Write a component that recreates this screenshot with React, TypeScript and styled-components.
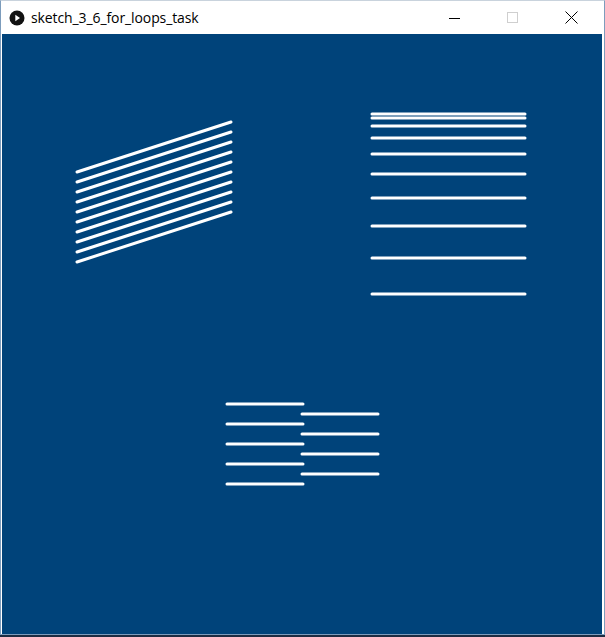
import React from 'react';
import styled, { createGlobalStyle } from 'styled-components';

const GlobalStyle = createGlobalStyle`
  html, body {
    margin: 0;
    padding: 0;
    background: #1d2c42;
  }
`;

const colours = {
  canvas: '#00437a',
  frame: '#7c9cbc',
  title: '#000000',
};

const Window = styled.div`
  display: flex;
  flex-direction: column;
  width: 602px;
  background: #ffffff;
  border: 1px solid ${colours.frame};
  border-top-color: #c9d3dd;
  padding: 0 0 0 1px;
`;

const TitleBar = styled.div`
  display: flex;
  flex-direction: row;
  align-items: center;
  height: 33px;
  padding-left: 7px;
`;

const AppIcon = styled.svg`
  width: 16px;
  height: 16px;
  flex: none;
`;

const Title = styled.span`
  margin-left: 6px;
  font-family: 'Open Sans', 'Noto Sans', sans-serif;
  font-size: 14px;
  letter-spacing: -0.1px;
  color: ${colours.title};
  flex: 1;
  white-space: nowrap;
`;

const Controls = styled.div`
  display: flex;
  flex-direction: row;
  height: 100%;
  padding-right: 4px;
`;

const ControlButton = styled.div`
  display: flex;
  align-items: center;
  justify-content: center;
  width: 58px;
  height: 100%;
`;

const Canvas = styled.div`
  width: 600px;
  height: 600px;
  background: ${colours.canvas};
`;

const Drawing = styled.svg`
  display: block;
  width: 600px;
  height: 600px;
`;

const range = (n: number) => Array.from({ length: n }, (_, i) => i);

const Sketch = () => (
  <Drawing viewBox="0 0 600 600">
    <g stroke="#ffffff" strokeWidth={3} strokeLinecap="round">
      {range(10).map((i) => (
        <line key={`s${i}`} x1={75} y1={138 + i * 10} x2={229} y2={88 + i * 10} />
      ))}
      {range(10).map((i) => {
        const y = 80 + 2 * i * (i + 1);
        return <line key={`r${i}`} x1={370} y1={y} x2={523} y2={y} />;
      })}
      {range(5).map((i) => (
        <line key={`a${i}`} x1={225} y1={370 + i * 20} x2={301} y2={370 + i * 20} />
      ))}
      {range(4).map((i) => (
        <line key={`b${i}`} x1={300} y1={380 + i * 20} x2={376} y2={380 + i * 20} />
      ))}
    </g>
  </Drawing>
);

const App = () => {
  return (
    <>
      <GlobalStyle />
      <Window>
        <TitleBar>
          <AppIcon viewBox="0 0 16 16">
            <circle cx="8" cy="8" r="7.5" fill="#111111" />
            <path d="M6.3 4.8 L11 8 L6.3 11.2 Z" fill="#ffffff" />
          </AppIcon>
          <Title>sketch_3_6_for_loops_task</Title>
          <Controls>
            <ControlButton>
              <svg width="12" height="12" viewBox="0 0 12 12">
                <line x1="0" y1="6.5" x2="11" y2="6.5" stroke="#000" strokeWidth="1" />
              </svg>
            </ControlButton>
            <ControlButton>
              <svg width="12" height="12" viewBox="0 0 12 12">
                <rect x="0.5" y="0.5" width="10" height="10" fill="none" stroke="#cfcfcf" strokeWidth="1" />
              </svg>
            </ControlButton>
            <ControlButton>
              <svg width="13" height="13" viewBox="0 0 13 13">
                <path d="M0.5 0.5 L12.5 12.5 M12.5 0.5 L0.5 12.5" stroke="#000" strokeWidth="1" />
              </svg>
            </ControlButton>
          </Controls>
        </TitleBar>
        <Canvas>
          <Sketch />
        </Canvas>
      </Window>
    </>
  );
};

export default App;
